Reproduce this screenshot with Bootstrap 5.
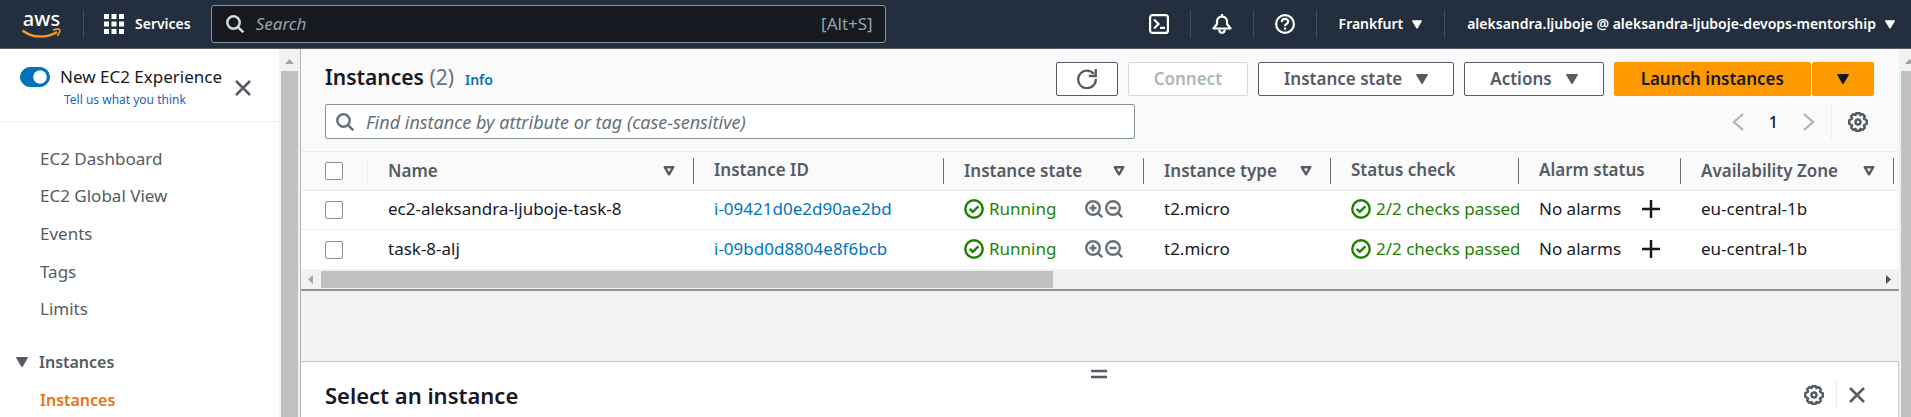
<!DOCTYPE html>
<html lang="en">
<head>
<meta charset="utf-8">
<meta name="viewport" content="width=device-width, initial-scale=1">
<title>Instances | EC2 Management Console</title>
<link rel="stylesheet" href="https://cdn.jsdelivr.net/npm/bootstrap@5.3.0/dist/css/bootstrap.min.css">
<script src="https://cdn.jsdelivr.net/npm/bootstrap@5.3.0/dist/js/bootstrap.bundle.min.js"></script>
<style>
  :root { --ink:#16191f; --slate:#545b64; --muted:#687078; --link:#0073bb; --line:#eaeded; --edge:#879596; }
  body { font-family:"Noto Sans",sans-serif; font-size:17px; line-height:24px; color:var(--ink); background:#f2f3f3; }
  a { text-decoration:none; color:var(--link); }
  svg { display:block; flex:none; }
  button { font-family:inherit; }
  .plain { border:0; padding:0; background:none; color:inherit; }

  /* top bar */
  .topbar { height:49px; padding:0 14px 0 22px; background:#232f3e; border-bottom:1px solid #545b64; color:#fff; font-size:14px; font-weight:600; }
  .topbar .rule { width:1px; height:28px; background:#414d5c; flex:none; }
  .home { margin-right:22px; }
  .services { margin:0 20px 0 11px; }
  .find-all { width:675px; height:38px; border:1px solid #879596; border-radius:3px; background:#16191f; padding:0 12px 0 14px; font-size:17px; font-weight:400; color:#95a5a6; }
  .find-all input, .finder input { background:none; border:0; outline:0; padding:0; flex:1; min-width:0; color:inherit; }
  .find-all input { margin-left:12px; }
  input::placeholder { color:inherit; font-style:italic; opacity:1; }
  .topbar .tools { gap:20px; }
  .menu-label { gap:9px; padding:0 2px; }

  /* side navigation */
  .side { width:300px; }
  .side-body { background:#fff; }
  .side-head { height:73px; padding:16px 28px 0 20px; border-bottom:1px solid var(--line); }
  .side-head .side-close { margin-top:15px; }
  .side .form-switch { padding:0; margin:0; min-height:0; gap:10px; }
  .side .form-check-input { float:none; width:30px; height:20px; margin:2px 0 0; border-color:var(--link); background-color:var(--link); }
  .side-head .think { font-size:12px; line-height:18px; margin:2px 0 0 44px; color:#2264c0; }
  .side-list { margin:0; padding:18px 0 0 40px; height:206px; display:grid; grid-auto-rows:1fr; align-items:center; }
  .side-list a { color:var(--slate); }
  .side-group { font-size:16px; font-weight:600; color:var(--slate); gap:11px; padding-left:16px; margin-top:22px; }
  .side-on { font-size:16px; font-weight:600; color:#ec7211; margin:14px 0 0 40px; }

  /* scroll tracks */
  .track { background:#f1f1f1; flex:none; }
  .track-y { width:21px; padding:10px 2px 0; }
  .track-y .thumb { flex:1; background:#c1c1c1; margin-top:7px; }
  .track-page { width:12px; padding-right:0; overflow:hidden; }
  .track-x { height:20px; padding:0 8px 0 7px; gap:8px; }
  .track-x .thumb { height:17px; background:#c1c1c1; }

  /* instance list */
  .panel { border-left:1px solid #aab7b8; background:#f2f3f3; }
  .list { background:#fafafa; border-bottom:2px solid #8d9599; }
  .list-head { padding:13px 25px 12px 24px; }
  h1, h2 { font-size:21px; line-height:28px; font-weight:600; margin:0; }
  h2 { font-size:22px; }
  .title-row { gap:11px; padding-bottom:4px; }
  .count { color:var(--muted); font-weight:400; }
  .info { font-size:14px; font-weight:600; }
  .tool-row { gap:10px; }
  .launch { gap:1px; }
  .act { height:34px; border:1px solid var(--slate); border-radius:2px; background:#fff; color:var(--slate); font-size:17px; font-weight:600; line-height:30px; padding:0 25px; display:flex; align-items:center; justify-content:center; gap:14px; }
  .act:disabled { border-color:#d5dbdb; color:#aab7b8; background:#fff; opacity:1; }
  .act-main { background:#f90; border-color:#f90; color:var(--ink); padding:0 26px; }
  .act-icon { width:62px; padding:0; }
  .finder { width:810px; height:35px; border:1px solid var(--edge); border-radius:2px; background:#fff; color:var(--muted); font-size:18px; padding:0 10px; gap:12px; }
  .pager { color:#aab7b8; padding-right:6px; }
  .pager .page { color:var(--ink); font-size:16px; font-weight:500; margin:0 25px; }
  .pager .rule, .split-head .rule { width:1px; background:var(--line); }

  .grid-table { width:100%; table-layout:fixed; margin:0; white-space:nowrap; border-collapse:separate; border-spacing:0; }
  .grid-table th { height:40px; padding:0; font-weight:600; font-size:17px; color:var(--slate); border:solid var(--line); border-width:1px 0; background:#fafafa; }
  .grid-table td { height:39px; padding:0 0 2px 20px; background:#fff; border-bottom:1px solid var(--line); overflow:hidden; }
  .grid-table tbody tr:last-child td { border-bottom:0; }
  .head-cell { height:26px; line-height:24px; padding:0 18px 0 20px; border-right:1px solid var(--muted); }
  .grid-table .pick { padding-left:24px; padding-bottom:0; }
  .head-cell.pick { border-color:var(--line); }
  .pick input { display:block; appearance:none; width:18px; height:18px; margin:0; border:1px solid var(--edge); border-radius:2px; background:#fff; }
  .good { color:#1d8102; gap:5px; }
  .state-cell { padding-right:21px; }
  .glasses { color:var(--muted); gap:2px; }
  .alarm-cell { padding-right:21px; }

  /* split panel */
  .split { margin-top:70px; background:#fff; border:solid #c3c7c9; border-width:1px 1px 0 0; }
  .grip { color:var(--slate); padding-top:7px; }
  .split-head { padding:0 33px 0 24px; }
  .split-head .rule { height:29px; }
  .split-tools { gap:12px; }
</style>
</head>
<body>
<svg width="0" height="0" class="position-absolute" aria-hidden="true">
  <defs>
    <symbol id="i-search" viewBox="0 0 18 18"><g fill="none" stroke="currentColor" stroke-width="2.500"><circle cx="7.500" cy="7.500" r="6.200"/><path d="M11.800 11.800L17.300 17.300"/></g></symbol>
    <symbol id="i-caret" viewBox="0 0 12 10"><path d="M.8 0h10.400q1.200 0 .6 1L6.800 9.500q-.8 1-1.600 0L.2 1Q-.4 0 .8 0z" fill="currentColor"/></symbol>
    <symbol id="i-sort" viewBox="0 0 12 10"><path d="M1.700 1.200h8.600L6 8.300z" fill="none" stroke="currentColor" stroke-width="2.400" stroke-linejoin="round"/></symbol>
    <symbol id="i-close" viewBox="0 0 16 16"><path d="M1 1l14 14M15 1L1 15" stroke="currentColor" stroke-width="2.500"/></symbol>
    <symbol id="i-check" viewBox="0 0 20 20"><g fill="none" stroke="currentColor" stroke-width="2.400"><circle cx="10" cy="10" r="8.700"/><path d="M5.800 9.800l3 3 5.600-5.400"/></g></symbol>
    <symbol id="i-plusglass" viewBox="0 0 18 18"><g fill="none" stroke="currentColor" stroke-width="2.400"><circle cx="8" cy="8" r="6.800"/><path d="M12.800 12.800L17.200 17.200M8 4.500v7M4.500 8h7"/></g></symbol>
    <symbol id="i-minusglass" viewBox="0 0 18 18"><g fill="none" stroke="currentColor" stroke-width="2.400"><circle cx="8" cy="8" r="6.800"/><path d="M12.800 12.800L17.200 17.200M4.500 8h7"/></g></symbol>
    <symbol id="i-plus" viewBox="0 0 18 18"><path d="M9 0v18M0 9h18" stroke="currentColor" stroke-width="2.500"/></symbol>
    <symbol id="i-gear" viewBox="0 0 20 20"><g fill="none" stroke="currentColor" stroke-width="2.400" stroke-linejoin="round"><path d="M8.200 1.200h3.600l.6 1.900 2.300-1 2.200 2.200-1 2.300 2.900 1.600v3.600l-2.900 1.600 1 2.300-2.200 2.200-2.300-1-.6 1.900H8.200l-.6-1.900-2.300 1-2.200-2.200 1-2.300-2.900-1.600V8.200l2.900-1.600-1-2.300 2.200-2.200 2.300 1z"/><circle cx="10" cy="10" r="2.500"/></g></symbol>
  </defs>
</svg>
<div class="d-flex flex-column vh-100 overflow-hidden">

  <header class="topbar d-flex align-items-center">
    <a href="#" aria-label="AWS home" class="home">
      <svg width="39" height="44" viewBox="0 -7 39 44">
        <text x="19.500" y="17" text-anchor="middle" font-family="Noto Sans, sans-serif" font-weight="500" font-size="20" fill="#fff">aws</text>
        <g fill="none" stroke="#f7981d" stroke-width="2"><path d="M.5 21.500C11 29.500 25 29.300 35 23" stroke-width="2.500"/><path d="M31 21.200c3-1.400 6.500-1.200 6.800-.6.400.9-.6 4.400-2.600 6.200" stroke-width="1.600"/></g>
      </svg>
    </a>
    <span class="rule me-3"></span>
    <button class="plain d-flex align-items-center fw-semibold ms-1" type="button">
      <svg width="20" height="20" viewBox="0 0 20 20" fill="#fff"><path d="M0 0h5v5H0zM7.500 0h5v5h-5zM15 0h5v5h-5zM0 7.500h5v5H0zM7.500 7.500h5v5h-5zM15 7.500h5v5h-5zM0 15h5v5H0zM7.500 15h5v5h-5zM15 15h5v5h-5z"/></svg>
      <span class="services">Services</span>
    </button>
    <form class="find-all d-flex align-items-center">
      <svg width="18" height="18" color="#d5dbdb"><use href="#i-search"/></svg>
      <input type="text" placeholder="Search" aria-label="Search">
      <span>[Alt+S]</span>
    </form>
    <div class="tools d-flex align-items-center ms-auto">
      <button class="plain" type="button" aria-label="CloudShell"><svg width="22" height="20" viewBox="-1 0 22 20" fill="none" stroke="#fff" stroke-width="2.200"><rect x="1.100" y="1.100" width="17.800" height="17.800" rx="2.500"/><path d="M5 5.500l4.500 4.500L5 14.500M11 13.800h5"/></svg></button>
      <span class="rule"></span>
      <button class="plain" type="button" aria-label="Notifications"><svg width="22" height="20" viewBox="-1 0 22 20" fill="none" stroke="#fff" stroke-width="2.200" stroke-linejoin="round"><path d="M10 0v2.500M1.500 14.500h17L15 10V7.500c0-6.400-10-6.400-10 0V10z"/><path d="M7.300 15.500c0 4.400 5.400 4.400 5.400 0"/></svg></button>
      <span class="rule"></span>
      <button class="plain" type="button" aria-label="Help"><svg width="22" height="20" viewBox="-1 0 22 20" fill="none" stroke="#fff" stroke-width="2.200"><circle cx="10" cy="10" r="8.900"/><path d="M6.800 8c0-4.200 6.400-4 6.400-.4 0 2.400-3.200 2.200-3.200 4.700M10 13.500v2.300"/></svg></button>
      <span class="rule"></span>
      <button class="plain menu-label d-flex align-items-center fw-semibold" type="button">Frankfurt <svg width="10" height="9"><use href="#i-caret"/></svg></button>
      <span class="rule"></span>
      <button class="plain menu-label d-flex align-items-center fw-semibold" type="button">aleksandra.ljuboje @ aleksandra-ljuboje-devops-mentorship <svg width="10" height="9"><use href="#i-caret"/></svg></button>
    </div>
  </header>

  <div class="d-flex flex-fill overflow-hidden">
    <nav class="side d-flex flex-shrink-0" aria-label="EC2">
      <div class="side-body flex-fill">
        <div class="side-head d-flex justify-content-between align-items-start">
          <div>
            <div class="form-check form-switch d-flex">
              <input class="form-check-input" type="checkbox" role="switch" id="newExp" checked>
              <label for="newExp">New EC2 Experience</label>
            </div>
            <a class="think d-block" href="#">Tell us what you think</a>
          </div>
          <button class="plain side-close" type="button" aria-label="Close navigation"><svg width="16" height="16" color="#545b64"><use href="#i-close"/></svg></button>
        </div>
        <ul class="side-list list-unstyled">
          <li><a href="#">EC2 Dashboard</a></li>
          <li><a href="#">EC2 Global View</a></li>
          <li><a href="#">Events</a></li>
          <li><a href="#">Tags</a></li>
          <li><a href="#">Limits</a></li>
        </ul>
        <button class="plain side-group d-flex align-items-center" type="button"><svg width="12" height="10"><use href="#i-caret"/></svg>Instances</button>
        <a class="side-on d-block" href="#">Instances</a>
      </div>
      <div class="track track-y d-flex flex-column align-items-stretch" aria-hidden="true">
        <svg class="align-self-center" width="9" height="5"><path d="M0 5L4.500 0 9 5z" fill="#a3a3a3"/></svg>
        <div class="thumb"></div>
      </div>
    </nav>

    <main class="panel flex-fill d-flex flex-column overflow-hidden">
      <section class="list">
        <div class="list-head">
          <div class="d-flex align-items-center justify-content-between">
            <div class="title-row d-flex align-items-baseline">
              <h1>Instances <span class="count">(2)</span></h1>
              <a class="info" href="#">Info</a>
            </div>
            <div class="tool-row d-flex">
              <button class="act act-icon" type="button" aria-label="Refresh"><svg width="20" height="20" viewBox="0 0 20 20" fill="none" stroke="currentColor" stroke-width="2.300"><path d="M16.800 4.800A8.800 8.800 0 1 0 18.800 10M18.800 0v7h-7"/></svg></button>
              <button class="act" type="button" disabled>Connect</button>
              <button class="act" type="button">Instance state <svg width="12" height="10"><use href="#i-caret"/></svg></button>
              <button class="act" type="button">Actions <svg width="12" height="10"><use href="#i-caret"/></svg></button>
              <div class="launch d-flex">
                <button class="act act-main" type="button">Launch instances</button>
                <button class="act act-main act-icon" type="button" aria-label="More launch options"><svg width="12" height="10"><use href="#i-caret"/></svg></button>
              </div>
            </div>
          </div>
          <div class="d-flex justify-content-between mt-2">
            <div class="finder d-flex align-items-center">
              <svg width="18" height="18"><use href="#i-search"/></svg>
              <input type="text" placeholder="Find instance by attribute or tag (case-sensitive)" aria-label="Find instance">
            </div>
            <div class="pager d-flex align-items-center">
              <button class="plain" type="button" aria-label="Previous page"><svg width="12" height="18" viewBox="0 0 12 18" fill="none" stroke="currentColor" stroke-width="2.300"><path d="M11 1L2 9l9 8"/></svg></button>
              <span class="page">1</span>
              <button class="plain" type="button" aria-label="Next page"><svg width="12" height="18" viewBox="0 0 12 18" fill="none" stroke="currentColor" stroke-width="2.300"><path d="M1 1l9 8-9 8"/></svg></button>
              <span class="rule align-self-stretch ms-3 me-3"></span>
              <button class="plain" type="button" aria-label="Preferences"><svg width="20" height="20" color="#545b64"><use href="#i-gear"/></svg></button>
            </div>
          </div>
        </div>

        <table class="grid-table">
          <colgroup><col style="width:67px"><col style="width:326px"><col style="width:250px"><col style="width:200px"><col style="width:187px"><col style="width:188px"><col style="width:162px"><col style="width:213px"><col></colgroup>
          <thead>
            <tr>
              <th><div class="head-cell pick d-flex align-items-center"><input type="checkbox" aria-label="Select all"></div></th>
              <th><div class="head-cell d-flex align-items-center justify-content-between">Name <svg width="12" height="10"><use href="#i-sort"/></svg></div></th>
              <th><div class="head-cell">Instance ID</div></th>
              <th><div class="head-cell d-flex align-items-center justify-content-between">Instance state <svg width="12" height="10"><use href="#i-sort"/></svg></div></th>
              <th><div class="head-cell d-flex align-items-center justify-content-between">Instance type <svg width="12" height="10"><use href="#i-sort"/></svg></div></th>
              <th><div class="head-cell">Status check</div></th>
              <th><div class="head-cell">Alarm status</div></th>
              <th><div class="head-cell d-flex align-items-center justify-content-between">Availability Zone <svg width="12" height="10"><use href="#i-sort"/></svg></div></th>
              <th></th>
            </tr>
          </thead>
          <tbody>
            <tr>
              <td class="pick"><input type="checkbox" aria-label="Select ec2-aleksandra-ljuboje-task-8"></td>
              <td>ec2-aleksandra-ljuboje-task-8</td>
              <td><a href="#">i-09421d0e2d90ae2bd</a></td>
              <td><div class="state-cell d-flex align-items-center justify-content-between"><span class="good d-flex align-items-center"><svg width="20" height="20"><use href="#i-check"/></svg>Running</span><span class="glasses d-flex"><svg width="18" height="18"><use href="#i-plusglass"/></svg><svg width="18" height="18"><use href="#i-minusglass"/></svg></span></div></td>
              <td>t2.micro</td>
              <td><span class="good d-flex align-items-center"><svg width="20" height="20"><use href="#i-check"/></svg>2/2 checks passed</span></td>
              <td><div class="alarm-cell d-flex align-items-center justify-content-between">No alarms <button class="plain" type="button" aria-label="Add alarm"><svg width="18" height="18"><use href="#i-plus"/></svg></button></div></td>
              <td>eu-central-1b</td>
              <td></td>
            </tr>
            <tr>
              <td class="pick"><input type="checkbox" aria-label="Select task-8-alj"></td>
              <td>task-8-alj</td>
              <td><a href="#">i-09bd0d8804e8f6bcb</a></td>
              <td><div class="state-cell d-flex align-items-center justify-content-between"><span class="good d-flex align-items-center"><svg width="20" height="20"><use href="#i-check"/></svg>Running</span><span class="glasses d-flex"><svg width="18" height="18"><use href="#i-plusglass"/></svg><svg width="18" height="18"><use href="#i-minusglass"/></svg></span></div></td>
              <td>t2.micro</td>
              <td><span class="good d-flex align-items-center"><svg width="20" height="20"><use href="#i-check"/></svg>2/2 checks passed</span></td>
              <td><div class="alarm-cell d-flex align-items-center justify-content-between">No alarms <button class="plain" type="button" aria-label="Add alarm"><svg width="18" height="18"><use href="#i-plus"/></svg></button></div></td>
              <td>eu-central-1b</td>
              <td></td>
            </tr>
          </tbody>
        </table>
        <div class="track track-x d-flex align-items-center" aria-hidden="true">
          <svg width="5" height="9"><path d="M5 0L0 4.500 5 9z" fill="#a3a3a3"/></svg>
          <div class="flex-fill"><div class="thumb" style="width:47%"></div></div>
          <svg width="5" height="9"><path d="M0 0l5 4.500L0 9z" fill="#505050"/></svg>
        </div>
      </section>

      <section class="split flex-fill">
        <div class="grip d-flex justify-content-center"><svg width="16" height="11" viewBox="0 0 16 11"><path d="M0 2h16M0 8h16" stroke="currentColor" stroke-width="2.500"/></svg></div>
        <div class="split-head d-flex align-items-center justify-content-between">
          <h2>Select an instance</h2>
          <div class="split-tools d-flex align-items-center">
            <button class="plain" type="button" aria-label="Preferences"><svg width="20" height="20" color="#545b64"><use href="#i-gear"/></svg></button>
            <span class="rule"></span>
            <button class="plain" type="button" aria-label="Close panel"><svg width="16" height="16" color="#545b64"><use href="#i-close"/></svg></button>
          </div>
        </div>
      </section>
    </main>

    <div class="track track-y track-page d-flex flex-column" aria-hidden="true">
      <svg class="ms-1" width="9" height="5"><path d="M0 5L4.500 0 9 5z" fill="#a3a3a3"/></svg>
      <div class="thumb"></div>
    </div>
  </div>
</div>
</body>
</html>
